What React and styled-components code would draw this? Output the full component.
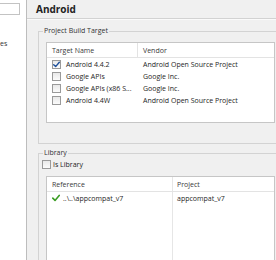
import React from 'react'
import styled, { createGlobalStyle } from 'styled-components'

const Global = createGlobalStyle`
   html, body {
      margin: 0;
      padding: 0;
      background: #f0f0f0;
   }
   body {
      font-family: 'Open Sans', 'Noto Sans', sans-serif;
      font-size: 7px;
      color: #1e1e1e;
   }
`

const targets = [
   { name: 'Android 4.4.2', vendor: 'Android Open Source Project', checked: true },
   { name: 'Google APIs', vendor: 'Google Inc.' },
   { name: 'Google APIs (x86 S...', vendor: 'Google Inc.' },
   { name: 'Android 4.4W', vendor: 'Android Open Source Project' },
]

const Check = ({ color, size = 7 }) => (
   <svg width={size} height={size} viewBox="0 0 10 10">
      <path
         d="M1 5.2 L3.8 8 L9 1.8"
         fill="none"
         stroke={color}
         strokeWidth="2"
         strokeLinecap="round"
         strokeLinejoin="round"
      />
   </svg>
)

export default function App() {
   return (
      <>
         <Global />
         <Window>
            <Sidebar>
               <Filter />
               <NavItem>es</NavItem>
            </Sidebar>
            <Main>
               <Title>Android</Title>
               <Body>
                  <Group $pad="6px 7px 20px">
                     <Legend>Project Build Target</Legend>
                     <Table $cols="91px 1fr" $height="79px">
                        <HeadCell $divider>Target Name</HeadCell>
                        <HeadCell>Vendor</HeadCell>
                        {targets.map((t) => (
                           <React.Fragment key={t.name}>
                              <Cell>
                                 <Box>{t.checked && <Check color="#1d4f9a" />}</Box>
                                 {t.name}
                              </Cell>
                              <Cell>{t.vendor}</Cell>
                           </React.Fragment>
                        ))}
                     </Table>
                  </Group>
                  <Group $top="4px" $pad="0 7px">
                     <Legend>Library</Legend>
                     <CheckRow>
                        <Box />
                        Is Library
                     </CheckRow>
                     <Table $cols="125px 1fr" $height="100px" $split="125px">
                        <HeadCell>Reference</HeadCell>
                        <HeadCell>Project</HeadCell>
                        <Cell $gap="3px">
                           <Check color="#3a9d23" size={8} />
                           ..\..\appcompat_v7
                        </Cell>
                        <Cell>appcompat_v7</Cell>
                     </Table>
                  </Group>
               </Body>
            </Main>
         </Window>
      </>
   )
}

const Window = styled.div`
   display: flex;
   width: 276px;
   height: 260px;
   overflow: hidden;
`

const Sidebar = styled.div`
   flex: none;
   width: 26px;
   background: #ffffff;
   border-right: 1px solid #bdbdbd;
   padding-top: 3px;
   box-sizing: content-box;
`

const Filter = styled.div`
   width: 19px;
   height: 10px;
   border: 1px solid #c3c3c3;
   border-left: none;
   background: #ffffff;
`

const NavItem = styled.div`
   margin-top: 24px;
   line-height: 10px;
   color: #333333;
`

const Main = styled.div`
   flex: none;
   width: 267px;
   display: flex;
   flex-direction: column;
`

const Title = styled.div`
   height: 18px;
   line-height: 18px;
   padding-left: 9px;
   font-size: 10px;
   font-weight: 700;
   color: #222222;
   border-bottom: 1px solid #d2d2d2;
   box-shadow: 0 1px 0 #fafafa;
`

const Body = styled.div`
   display: flex;
   flex-direction: column;
   padding: 7px 11px 0 11px;
`

const Group = styled.fieldset`
   margin: ${(p) => p.$top || 0} 0 0 0;
   padding: ${(p) => p.$pad};
   border: 1px solid #d3d3d3;
   min-width: 0;
`

const Legend = styled.legend`
   margin-left: -3px;
   padding: 0 1px;
   line-height: 10px;
   font-size: 7px;
   color: #333333;
`

const Table = styled.div`
   display: grid;
   grid-template-columns: ${(p) => p.$cols};
   grid-auto-rows: 12px;
   grid-template-rows: 15px;
   align-content: start;
   height: ${(p) => p.$height};
   border: 1px solid #c6c6c6;
   background: ${(p) =>
      p.$split
         ? `linear-gradient(to right, transparent ${p.$split}, #e6e6e6 ${p.$split}, #e6e6e6 calc(${p.$split} + 1px), transparent calc(${p.$split} + 1px)), #ffffff`
         : '#ffffff'};
`

const HeadCell = styled.div`
   display: flex;
   align-items: center;
   padding-left: 5px;
   border-bottom: 1px solid #e3e3e3;
   border-right: ${(p) => (p.$divider ? '1px solid #e3e3e3' : 'none')};
   color: #3a3a3a;
   white-space: nowrap;
`

const Cell = styled.div`
   display: flex;
   align-items: center;
   gap: ${(p) => p.$gap || '5px'};
   padding-left: 5px;
   white-space: nowrap;
   overflow: hidden;
`

const Box = styled.span`
   flex: none;
   display: inline-flex;
   align-items: center;
   justify-content: center;
   width: 7px;
   height: 7px;
   border: 1px solid #9a9a9a;
   background: linear-gradient(#e9e9e9, #fbfbfb);
`

const CheckRow = styled.div`
   display: flex;
   align-items: center;
   gap: 2px;
   height: 13px;
   margin: 0 0 5px -4px;
   color: #222222;
`
